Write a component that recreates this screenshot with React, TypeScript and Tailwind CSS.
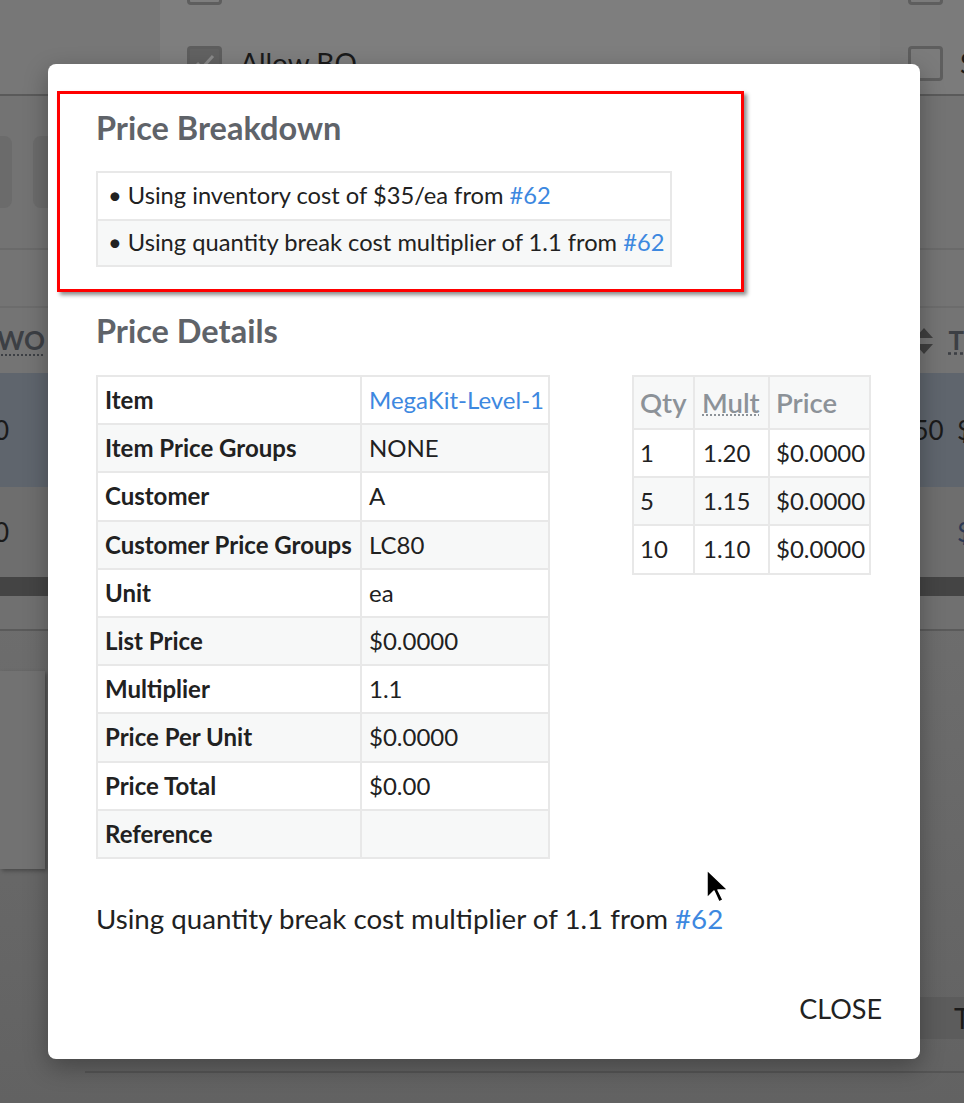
import React from 'react'

const detailRows: { label: string; value: string; link?: boolean }[] = [
  { label: 'Item', value: 'MegaKit-Level-1', link: true },
  { label: 'Item Price Groups', value: 'NONE' },
  { label: 'Customer', value: 'A' },
  { label: 'Customer Price Groups', value: 'LC80' },
  { label: 'Unit', value: 'ea' },
  { label: 'List Price', value: '$0.0000' },
  { label: 'Multiplier', value: '1.1' },
  { label: 'Price Per Unit', value: '$0.0000' },
  { label: 'Price Total', value: '$0.00' },
  { label: 'Reference', value: '' },
]

const breaks = [
  { qty: '1', mult: '1.20', price: '$0.0000' },
  { qty: '5', mult: '1.15', price: '$0.0000' },
  { qty: '10', mult: '1.10', price: '$0.0000' },
]

function Checkbox({ checked }: { checked?: boolean }) {
  return (
    <div className={`shrink-0 w-[35px] h-[35px] rounded-[4px] border-[3px] border-[#5e5e5e] flex items-center justify-center ${checked ? 'bg-[#626262]' : ''}`}>
      {checked && (
        <svg width="24" height="24" viewBox="0 0 24 24" fill="none" stroke="#8a8a8a" strokeWidth="3">
          <path d="M4 12l5 5L20 5" />
        </svg>
      )}
    </div>
  )
}

function Background() {
  return (
    <div className="w-full h-[1103px] overflow-hidden flex flex-col bg-gradient-to-b from-[#7b7b7b] to-[#626262] text-[#1a1a1a]">
      {/* checkbox rows */}
      <div className="h-[96px] flex border-b-2 border-[#5a5a5a] shrink-0">
        <div className="w-[160px] shrink-0 bg-[#777777]" />
        <div className="flex-1 flex flex-col pl-[27px] bg-[#7e7e7e]">
          <div className="-mt-[30px] h-[35px]"><Checkbox /></div>
          <div className="mt-[37px] flex items-center gap-[18px] text-[28px]">
            <Checkbox checked />
            <span>Allow BO</span>
          </div>
        </div>
        <div className="w-[84px] shrink-0 flex flex-col pl-[28px] bg-[#7b7b7b]">
          <div className="-mt-[30px] h-[35px]"><Checkbox /></div>
          <div className="mt-[37px] flex items-center gap-[17px] text-[28px] whitespace-nowrap">
            <Checkbox />
            <span>S</span>
          </div>
        </div>
      </div>
      {/* toolbar */}
      <div className="h-[154px] shrink-0 flex items-center gap-[21px] -ml-[20px] border-b-2 border-[#6a6a6a] bg-[#737373]">
        <div className="w-[32px] h-[72px] rounded-[8px] bg-[#6b6b6b]" />
        <div className="w-[32px] h-[72px] rounded-[8px] bg-[#6b6b6b]" />
      </div>
      <div className="h-[58px] shrink-0 bg-[#747474] border-b-2 border-[#6c6c6c]" />
      {/* table header */}
      <div className="h-[65px] shrink-0 flex items-center justify-between bg-[#747474] text-[26px] text-[#3c3f44]">
        <span className="font-bold -ml-[3px] underline decoration-dotted decoration-2 underline-offset-4">WO</span>
        <div className="flex items-center gap-[14px]">
          <svg width="20" height="30" viewBox="0 0 20 30" fill="#3f3f3f">
            <path d="M10 2l9 10H1z M10 28l9-10H1z" />
          </svg>
          <span className="font-bold underline decoration-dotted">T</span>
        </div>
      </div>
      <div className="h-[114px] shrink-0 flex items-center justify-between bg-[#5f656d] text-[26px]">
        <span className="-ml-[6px]">0</span>
        <span className="-mr-[8px]">50 &nbsp;$</span>
      </div>
      <div className="h-[90px] shrink-0 flex items-center justify-between bg-[#6e6e6e] text-[26px]">
        <span className="-ml-[6px]">0</span>
        <span className="-mr-[8px] text-[#2d3a55]">$</span>
      </div>
      <div className="h-[19px] shrink-0 bg-[#444444]" />
      <div className="h-[35px] shrink-0 bg-[#707070] border-b-2 border-[#5a5a5a]" />
      <div className="flex-1 flex flex-col pt-[40px]">
        <div className="w-[45px] h-[198px] bg-[#727272] shadow-[2px_2px_4px_rgba(0,0,0,0.3)]" />
        <div className="mt-[128px] ml-auto w-[60px] h-[42px] bg-[#5c5c5c] flex items-center pl-[50px] text-[28px] overflow-hidden">T</div>
        <div className="mt-[32px] ml-[85px] h-[2px] bg-[#555555]" />
      </div>
    </div>
  )
}

export default function App() {
  return (
    <div className="relative w-[964px] h-[1103px] overflow-hidden" style={{ fontFamily: 'Lato, "Open Sans", sans-serif' }}>
      <Background />

      {/* modal */}
      <div className="absolute left-[48px] top-[64px] w-[872px] h-[995px] bg-white rounded-[8px] shadow-[0_8px_24px_rgba(0,0,0,0.3)] flex flex-col pl-[48px] pr-[38px] pt-[44px] pb-[30px] text-[#212121]">
        <h2 className="text-[32.5px] leading-[40px] font-bold text-[#5f6369]">Price Breakdown</h2>
        <div className="mt-[23px] w-[576px] border-2 border-[#e8e8e8] text-[23.7px]">
          <div className="h-[46px] flex items-center pl-[10px] whitespace-nowrap">
            • Using inventory cost of $35/ea from&nbsp;<span className="text-[#3d88e0]">#62</span>
          </div>
          <div className="h-[46px] flex items-center pl-[10px] bg-[#f7f8f8] border-t-2 border-[#e8e8e8] whitespace-nowrap">
            • Using quantity break cost multiplier of 1.1 from&nbsp;<span className="text-[#3d88e0]">#62</span>
          </div>
        </div>

        <h2 className="mt-[44px] text-[32.5px] leading-[40px] font-bold text-[#5f6369]">Price Details</h2>
        <div className="mt-[24px] flex items-start gap-[82px]">
          <table className="w-[454px] table-fixed border-collapse text-[24px]">
            <tbody>
              {detailRows.map((r, i) => (
                <tr key={r.label} className={i % 2 === 1 ? 'bg-[#f7f8f8]' : ''}>
                  <td className="w-[264px] h-[48.2px] border-2 border-[#e8e8e8] px-[7px] font-bold whitespace-nowrap">{r.label}</td>
                  <td className={`h-[48.2px] border-2 border-[#e8e8e8] px-[7px] whitespace-nowrap ${r.link ? 'text-[#3d88e0]' : ''}`}>{r.value}</td>
                </tr>
              ))}
            </tbody>
          </table>
          <table className="w-[239px] table-fixed border-collapse text-[24px]">
            <thead>
              <tr className="bg-[#f7f8f8] text-[27.5px] text-[#8c9298]">
                <th className="w-[61px] h-[53px] border-2 border-[#e8e8e8] px-[6px] text-left font-semibold">Qty</th>
                <th className="w-[75px] h-[53px] border-2 border-[#e8e8e8] px-[7px] text-left font-semibold">
                  <abbr className="underline decoration-dotted decoration-2 underline-offset-2">Mult</abbr>
                </th>
                <th className="h-[53px] border-2 border-[#e8e8e8] px-[6px] text-left font-semibold">Price</th>
              </tr>
            </thead>
            <tbody>
              {breaks.map((b, i) => (
                <tr key={b.qty} className={i % 2 === 1 ? 'bg-[#f7f8f8]' : ''}>
                  <td className="h-[48.2px] border-2 border-[#e8e8e8] px-[6px]">{b.qty}</td>
                  <td className="h-[48.2px] border-2 border-[#e8e8e8] px-[8px]">{b.mult}</td>
                  <td className="h-[48.2px] border-2 border-[#e8e8e8] px-[6px] whitespace-nowrap">{b.price}</td>
                </tr>
              ))}
            </tbody>
          </table>
        </div>

        <p className="mt-[40px] text-[27.7px] leading-[40px] whitespace-nowrap">
          Using quantity break cost multiplier of 1.1 from <span className="text-[#3d88e0]">#62</span>
        </p>

        <div className="mt-auto flex justify-end">
          <button className="text-[27px] uppercase text-[#222]">Close</button>
        </div>
      </div>

      {/* annotation box */}
      <div className="absolute left-[57px] top-[91px] w-[687px] h-[201px] border-[3px] border-[#ff0000] shadow-[3px_3px_4px_rgba(0,0,0,0.45)] pointer-events-none" />

      {/* mouse cursor */}
      <svg className="absolute left-[705px] top-[868px]" width="26" height="38" viewBox="0 0 26 38">
        <path d="M2 2 L2 30 L9 23 L14 34 L18 32 L13 22 L23 22 Z" fill="#000" stroke="#fff" strokeWidth="1.5" strokeLinejoin="round" />
      </svg>
    </div>
  )
}
